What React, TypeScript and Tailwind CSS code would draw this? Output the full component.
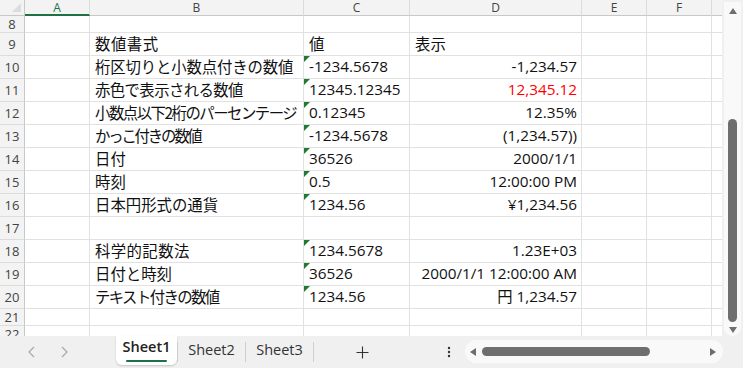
import React from "react";

type Row = { n: number; h: number; b?: string; c?: string; d?: string; red?: boolean; tri?: boolean; ls?: string };

const rows: Row[] = [
  { n: 8, h: 17 },
  { n: 9, h: 23, b: "数値書式", c: "値", d: "表示", ls: "tracking-[0.5px]" },
  { n: 10, h: 23, b: "桁区切りと小数点付きの数値", c: "-1234.5678", d: "-1,234.57", tri: true, ls: "tracking-[-0.15px]" },
  { n: 11, h: 23, b: "赤色で表示される数値", c: "12345.12345", d: "12,345.12", red: true, tri: true, ls: "tracking-[-0.6px]" },
  { n: 12, h: 23, b: "小数点以下2桁のパーセンテージ", c: "0.12345", d: "12.35%", tri: true, ls: "tracking-[-1.5px]" },
  { n: 13, h: 23, b: "かっこ付きの数値", c: "-1234.5678", d: "(1,234.57))", tri: true, ls: "tracking-[-2.2px]" },
  { n: 14, h: 23, b: "日付", c: "36526", d: "2000/1/1", tri: true },
  { n: 15, h: 23, b: "時刻", c: "0.5", d: "12:00:00 PM", tri: true },
  { n: 16, h: 23, b: "日本円形式の通貨", c: "1234.56", d: "¥1,234.56", tri: true },
  { n: 17, h: 23 },
  { n: 18, h: 23, b: "科学的記数法", c: "1234.5678", d: "1.23E+03", tri: true, ls: "tracking-[0.4px]" },
  { n: 19, h: 23, b: "日付と時刻", c: "36526", d: "2000/1/1 12:00:00 AM", tri: true },
  { n: 20, h: 23, b: "テキスト付きの数値", c: "1234.56", d: "円 1,234.57", tri: true, ls: "tracking-[-1.6px]" },
  { n: 21, h: 17 },
  { n: 22, h: 17 },
];

const cellFont = { fontFamily: '"Open Sans", "Noto Sans CJK JP", sans-serif' };

function Cell({
  w,
  children,
  right,
  red,
  tri,
  jp,
  ls,
}: {
  w: string;
  children?: React.ReactNode;
  right?: boolean;
  red?: boolean;
  tri?: boolean;
  jp?: boolean;
  ls?: string;
}) {
  return (
    <div
      className={`relative shrink-0 ${w} h-full border-r border-b border-[#e1e1e1] flex items-center overflow-hidden whitespace-nowrap leading-none ${
        jp ? "text-[15.4px] font-['Noto_Sans_CJK_JP',sans-serif]" : "text-[15.3px]"
      } ${ls ?? ""} ${right ? "justify-end pr-[4px]" : "justify-start pl-[5px]"} ${red ? "text-[#ff0000]" : "text-[#111]"}`}
    >
      {tri && (
        <span className="absolute left-0 top-0 w-0 h-0 border-t-[6px] border-t-[#1e7b31] border-r-[6px] border-r-transparent" />
      )}
      {children}
    </div>
  );
}

function ColHead({ w, label }: { w: string; label: string }) {
  return (
    <div className={`${w} shrink-0 flex items-center justify-center pt-[1px] leading-none border-r border-b border-r-[#dcdcdc] border-b-[#c8c8c8]`}>
      {label}
    </div>
  );
}

export default function App() {
  return (
    <div className="w-[743px] h-[368px] overflow-hidden bg-[#f0f0f0] flex flex-col" style={cellFont}>
      <div className="flex h-[336px]">
        {/* Grid */}
        <div className="w-[722px] h-full overflow-hidden bg-white flex flex-col">
          {/* column header */}
          <div className="flex h-[16px] shrink-0 bg-[#f3f3f3] text-[12px] leading-none text-[#444]">
            <div className="relative w-[25px] shrink-0 border-r border-b border-[#c8c8c8]">
              <span className="absolute right-[3px] bottom-[3px] w-0 h-0 border-l-[9px] border-l-transparent border-b-[9px] border-b-[#dcdcdc]" />
            </div>
            <div className="w-[65px] shrink-0 flex items-center justify-center pt-[1px] leading-none border-r border-[#dcdcdc] border-b-2 border-b-[#1e7145] text-[#1e7145]">A</div>
            <ColHead w="w-[214px]" label="B" />
            <ColHead w="w-[106px]" label="C" />
            <ColHead w="w-[172px]" label="D" />
            <ColHead w="w-[65px]" label="E" />
            <ColHead w="w-[65px]" label="F" />
            <div className="flex-1 border-b border-[#c8c8c8]" />
          </div>
          {rows.map((r) => (
            <div key={r.n} className="flex shrink-0" style={{ height: r.h }}>
              <div className="w-[25px] shrink-0 h-full bg-[#f3f3f3] border-r border-b border-r-[#c8c8c8] border-b-[#dcdcdc] flex items-center justify-center text-[13px] leading-none text-[#444]">
                {r.n}
              </div>
              <Cell w="w-[65px]" />
              <Cell w="w-[214px]" jp ls={r.ls}>{r.b}</Cell>
              <Cell w="w-[106px]" tri={r.tri} jp={r.n === 9}>{r.c}</Cell>
              <Cell w="w-[172px]" right={r.n !== 9} red={r.red} jp={r.n === 9}>{r.d}</Cell>
              <Cell w="w-[65px]" />
              <Cell w="w-[65px]" />
              <div className="flex-1 h-full border-b border-[#e1e1e1]" />
            </div>
          ))}
        </div>
        {/* vertical scrollbar */}
        <div className="w-[21px] h-full bg-[#f0f0f0] flex justify-center pt-[2px]">
          <div className="w-[17px] h-full rounded-b-[9px] bg-[#f9f9f9] flex flex-col items-center">
            <svg width="10" height="8" viewBox="0 0 10 8" className="mt-[5px]">
              <polygon points="5,1 9,7 1,7" fill="#6e6e6e" />
            </svg>
            <div className="w-[9px] h-[203px] mt-[104px] rounded-full bg-[#6e6e6e]" />
            <svg width="10" height="8" viewBox="0 0 10 8" className="mt-[4px]">
              <polygon points="1,1 9,1 5,7" fill="#6e6e6e" />
            </svg>
          </div>
        </div>
      </div>
      {/* tab bar */}
      <div className="h-[32px] flex items-start bg-[#f0f0f0]">
        <div className="w-[116px] h-full flex items-center shrink-0">
          <svg width="10" height="12" viewBox="0 0 10 12" className="ml-[27px]">
            <polyline points="7,1 2,6 7,11" fill="none" stroke="#a8a8a8" strokeWidth="1.2" />
          </svg>
          <svg width="10" height="12" viewBox="0 0 10 12" className="ml-[22px]">
            <polyline points="3,1 8,6 3,11" fill="none" stroke="#a8a8a8" strokeWidth="1.2" />
          </svg>
        </div>
        <div className="w-[61px] h-[29px] shrink-0 bg-white rounded-b-[6px] shadow-[0_1px_2px_rgba(0,0,0,0.18)] flex flex-col items-center justify-center">
          <span className="text-[14.5px] font-semibold text-[#222] leading-none mt-[1px]">Sheet1</span>
          <span className="w-[41px] h-[2.5px] bg-[#1e7145] mt-[5px] rounded-full" />
        </div>
        <div className="w-px h-[20px] bg-[#cfcfcf] mt-[6px] shrink-0" />
        <div className="w-[67px] h-[29px] shrink-0 flex items-center justify-center text-[14.5px] leading-none text-[#333]">Sheet2</div>
        <div className="w-px h-[20px] bg-[#cfcfcf] mt-[6px] shrink-0" />
        <div className="w-[67px] h-[29px] shrink-0 flex items-center justify-center text-[14.5px] leading-none text-[#333]">Sheet3</div>
        <div className="w-px h-[20px] bg-[#cfcfcf] mt-[6px] shrink-0" />
        <div className="w-[97px] h-full shrink-0 flex items-center justify-center">
          <svg width="13" height="13" viewBox="0 0 13 13">
            <path d="M6.5 0.5V12.5M0.5 6.5H12.5" stroke="#333" strokeWidth="1.1" />
          </svg>
        </div>
        <div className="w-[54px] h-full shrink-0 flex items-center pl-[36px]">
          <svg width="4" height="12" viewBox="0 0 4 12">
            <circle cx="2" cy="2" r="1.2" fill="#333" />
            <circle cx="2" cy="6" r="1.2" fill="#333" />
            <circle cx="2" cy="10" r="1.2" fill="#333" />
          </svg>
        </div>
        <div className="mt-[4px] w-[258px] h-[23px] rounded-full bg-[#f9f9f9] flex items-center">
          <svg width="8" height="10" viewBox="0 0 8 10" className="ml-[4px]">
            <polygon points="1,5 7,1 7,9" fill="#6e6e6e" />
          </svg>
          <div className="ml-[5px] w-[168px] h-[9px] rounded-full bg-[#6e6e6e]" />
          <div className="flex-1" />
          <svg width="8" height="10" viewBox="0 0 8 10" className="mr-[6px]">
            <polygon points="1,1 7,5 1,9" fill="#6e6e6e" />
          </svg>
        </div>
      </div>
    </div>
  );
}
